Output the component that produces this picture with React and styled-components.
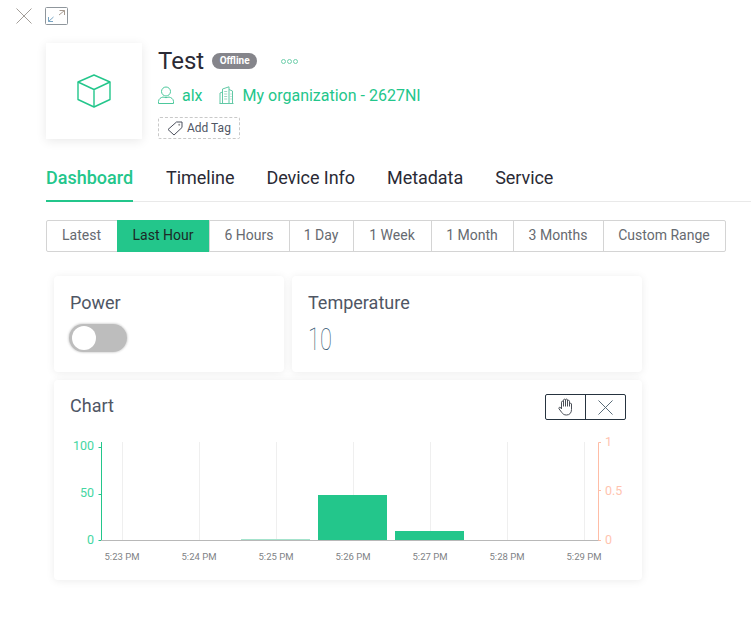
import React from 'react'
import styled, { createGlobalStyle } from 'styled-components'

const GREEN = '#23c68b'
const INK = '#2a2a35'
const SLATE = '#4f5664'

const GlobalStyle = createGlobalStyle`
  html, body {
    margin: 0;
    background: #fff;
    font-family: Roboto, "Liberation Sans", sans-serif;
  }
`

const Page = styled.div`
  width: 751px;
  height: 622px;
  overflow: hidden;
  background: #fff;
`

const TopBar = styled.div`
  display: flex;
  align-items: center;
  gap: 13px;
  height: 18px;
  padding: 7px 0 0 16px;

  svg {
    display: block;
  }
`

const Header = styled.header`
  display: flex;
  gap: 16px;
  margin: 18px 0 0 46px;
`

const Avatar = styled.div`
  display: flex;
  align-items: center;
  justify-content: center;
  width: 96px;
  height: 96px;
  background: #fff;
  box-shadow: 0 2px 10px rgba(0, 0, 0, 0.09);
`

const Info = styled.div`
  display: flex;
  flex-direction: column;
`

const TitleRow = styled.div`
  display: flex;
  align-items: center;
  height: 34px;
  margin-top: 1px;
`

const Title = styled.h1`
  margin: 0;
  font-size: 24px;
  font-weight: 400;
  line-height: 34px;
  color: ${INK};
`

const Badge = styled.span`
  display: inline-block;
  width: 45px;
  height: 16px;
  margin-left: 8px;
  border-radius: 8px;
  background: #85858b;
  color: #fff;
  font-size: 10px;
  font-weight: 700;
  line-height: 16px;
  text-align: center;
`

const Dots = styled.span`
  display: flex;
  gap: 1px;
  margin-left: 24px;
`

const Dot = styled.i`
  display: block;
  width: 5px;
  height: 5px;
  box-sizing: border-box;
  border: 1px solid #6fcfac;
  border-radius: 50%;
`

const MetaRow = styled.div`
  display: flex;
  align-items: center;
  height: 24px;
  margin-top: 5px;
  color: ${GREEN};
  font-size: 16px;
`

const MetaText = styled.span`
  margin-left: ${props => props.$gap}px;
`

const MetaIcon = styled.span`
  display: flex;
  margin-left: ${props => props.$offset || 0}px;
`

const AddTag = styled.div`
  display: flex;
  align-items: center;
  gap: 4px;
  box-sizing: border-box;
  width: 82px;
  height: 22px;
  margin-top: 10px;
  padding-left: 8px;
  border: 1px dashed #c9c9c9;
  border-radius: 2px;
  color: ${SLATE};
  font-size: 12px;
`

const Tabs = styled.nav`
  display: flex;
  gap: 32px;
  height: 44px;
  margin: 18px 0 0 46px;
  border-bottom: 1px solid #e9e9e9;
`

const Tab = styled.a`
  box-sizing: border-box;
  height: 45px;
  margin-right: ${props => (props.$active ? 1 : 0)}px;
  padding-top: 9px;
  border-bottom: ${props => (props.$active ? `2px solid ${GREEN}` : 'none')};
  color: ${props => (props.$active ? GREEN : INK)};
  font-size: 18px;
  font-weight: ${props => (props.$active ? 500 : 400)};
  letter-spacing: ${props => (props.$active ? 0 : -0.05)}px;
  line-height: 24px;
`

const Ranges = styled.div`
  display: flex;
  box-sizing: border-box;
  width: 680px;
  height: 32px;
  margin: 18px 0 0 46px;
  border: 1px solid #d4d4d4;
  border-radius: 2px;
`

const Range = styled.div`
  box-sizing: border-box;
  width: ${props => props.$width}px;
  margin: ${props => (props.$active ? '-1px 0' : '0')};
  padding-right: 1px;
  border-left: ${props => (props.$first ? 'none' : `1px solid ${props.$active ? GREEN : '#d4d4d4'}`)};
  background: ${props => (props.$active ? GREEN : 'transparent')};
  color: ${props => (props.$active ? '#1c2a27' : '#666a70')};
  font-size: 14px;
  line-height: ${props => (props.$active ? 30 : 28)}px;
  text-align: center;
`

const Grid = styled.div`
  display: grid;
  grid-template-columns: 230px 350px;
  gap: 8px;
  width: 588px;
  margin: 24px 0 0 54px;
`

const Card = styled.section`
  position: relative;
  box-sizing: border-box;
  height: ${props => props.$height}px;
  grid-column: ${props => (props.$wide ? '1 / 3' : 'auto')};
  padding: 15px 16px 0;
  border-radius: 4px;
  background: #fff;
  box-shadow: 0 1px 8px rgba(0, 0, 0, 0.08);
`

const CardTitle = styled.h2`
  margin: 0;
  color: ${SLATE};
  font-size: 18px;
  font-weight: 400;
  line-height: 24px;
`

const Switch = styled.div`
  position: relative;
  width: 58px;
  height: 28px;
  margin: 9px 0 0 -1px;
  border-radius: 14px;
  background: #bdbdbd;
  box-shadow: 0 0 2px 1px rgba(0, 0, 0, 0.14);
`

const Knob = styled.div`
  position: absolute;
  top: 2px;
  left: 3px;
  width: 24px;
  height: 24px;
  border-radius: 50%;
  background: #fff;
`

const Value = styled.div`
  margin-top: 6px;
  color: #2f5470;
  font-size: 32px;
  font-weight: 100;
  line-height: 36px;
  transform: scaleX(0.68);
  transform-origin: left center;
`

const ChartHead = styled.div`
  display: flex;
  align-items: flex-start;
  justify-content: space-between;
  margin-top: -1px;
`

const ChartTools = styled.div`
  display: flex;
  border: 1px solid #26333f;
  border-radius: 2px;
`

const ChartTool = styled.button`
  display: flex;
  align-items: center;
  justify-content: center;
  width: ${props => (props.$divided ? 40 : 39)}px;
  height: 24px;
  padding: 0;
  border: none;
  border-left: ${props => (props.$divided ? '1px solid #26333f' : 'none')};
  background: none;
`

const ChartBox = styled.div`
  margin: 14px -16px 0;

  svg {
    display: block;
  }
`

const CloseIcon = ({ size, color }) => (
  <svg width={size} height={size} viewBox="0 0 16 16" fill="none" stroke={color} strokeWidth="1">
    <path d="M0.5 0.5 15.5 15.5M15.5 0.5 0.5 15.5" />
  </svg>
)

const ExpandIcon = () => (
  <svg width="23" height="18" viewBox="0 0 23 18" fill="none">
    <rect x="0.5" y="0.5" width="22" height="17" rx="1" stroke="#8f969c" />
    <path d="M14.5 3.5H19.5V8M19.5 3.5 14 8" stroke="#a69a90" />
    <path d="M3.5 10V14.5H8M3.5 14.5 8.5 10" stroke="#7aa6c4" />
  </svg>
)

const CubeIcon = () => (
  <svg width="34" height="34" viewBox="0 0 34 34" fill="none" stroke={GREEN} strokeWidth="1.4" strokeLinejoin="round">
    <path d="M17 1 33 8V25.5L17 33 1 25.5V8Z" />
    <path d="M1 8 17 15.5 33 8M17 15.5V33" />
  </svg>
)

const UserIcon = () => (
  <svg width="16" height="18" viewBox="0 0 16 18" fill="none" stroke="#4cc89c" strokeWidth="1">
    <circle cx="8" cy="5.5" r="4.5" />
    <path d="M0.5 17.5V15.5C0.5 12.8 3 11.5 5 11 6.5 11.8 9.5 11.8 11 11 13 11.5 15.5 12.8 15.5 15.5V17.5Z" />
  </svg>
)

const BuildingIcon = () => (
  <svg width="15" height="18" viewBox="0 0 15 18" fill="none" stroke="#62c9a6" strokeWidth="1">
    <path d="M3.5 17.5V3L10 0.8V17.5M10 3.5 13.5 5V17.5M0.5 17.5H14.5M1 17.5V7L3.5 6" />
    <path d="M5.2 5.5H8.2M5.2 8H8.2M5.2 10.5H8.2M5.2 13H8.2M11.4 8H12.6M11.4 10.5H12.6M11.4 13H12.6" stroke="#9ed6c2" />
  </svg>
)

const TagIcon = () => (
  <svg width="16" height="15" viewBox="0 0 16 15" fill="none" stroke="#4b4f5c" strokeWidth="1">
    <path d="M9.5 1 15 1 15 6.5 7 14 1 8.5Z" strokeLinejoin="round" />
    <circle cx="12.2" cy="3.8" r="1" fill="#9a9a9a" stroke="none" />
  </svg>
)

const HandIcon = () => (
  <svg width="15" height="18" viewBox="0 0 15 18" fill="none" stroke="#4a4f57" strokeWidth="1" strokeLinejoin="round">
    <path d="M3.5 11V4.2C3.5 2.8 5.5 2.8 5.5 4.2V2.2C5.5 0.8 7.5 0.8 7.5 2.2V2C7.5 0.7 9.5 0.7 9.5 2V3.2C9.5 2 11.5 2 11.5 3.2V6C11.5 5 13.5 5 13.5 6V11.5C13.5 15 11.5 17 8.5 17 6 17 5 16.2 3.8 14.5L1 10.8C0.3 9.7 1.8 8.6 2.7 9.6Z" />
    <path d="M5.5 4V8.5M7.5 2V8.5M9.5 3V8.5M11.5 5.5V8.5" />
  </svg>
)

const RANGES = [
  ['Latest', 70],
  ['Last Hour', 92],
  ['6 Hours', 80],
  ['1 Day', 64],
  ['1 Week', 78],
  ['1 Month', 82],
  ['3 Months', 90],
  ['Custom Range', 122],
]

const TIMES = ['5:23 PM', '5:24 PM', '5:25 PM', '5:26 PM', '5:27 PM', '5:28 PM', '5:29 PM']

// y 0 is the top of the plot (page y 442), x is page x - 54
const Chart = () => (
  <svg width="588" height="140" viewBox="0 -8 588 140" fontFamily="Roboto, sans-serif">
    {TIMES.map((time, i) => (
      <g key={time}>
        <line x1={68.5 + i * 77} x2={68.5 + i * 77} y1="0" y2="98" stroke="#efefef" />
        <text x={68 + i * 77} y="118" fontSize="9.5" textAnchor="middle" fill="#808285">{time}</text>
      </g>
    ))}
    <rect x="187" y="97" width="69" height="1" fill="#a4e3cc" />
    <rect x="264" y="53" width="69" height="45" fill={GREEN} />
    <rect x="341" y="89" width="69" height="9" fill={GREEN} />
    <path d="M47.5 0V98.5" stroke={GREEN} />
    <path d="M44.5 5.5H47.5M44.5 52.5H47.5M44.5 98.5H47.5" stroke={GREEN} />
    <path d="M47 98.5H545" stroke="#b8b8b8" />
    <path d="M544.5 0.5V98.5M544.5 0.5H547M544.5 48.5H547M544.5 98.5H547" stroke="#ffbda6" fill="none" />
    <g fontSize="12.5" fill="#45d6a2" textAnchor="end">
      <text x="40" y="8">100</text>
      <text x="40" y="55">50</text>
      <text x="40" y="102">0</text>
    </g>
    <g fontSize="12.5" fill="#ffc4b0">
      <text x="551" y="4">1</text>
      <text x="551" y="53">0.5</text>
      <text x="551" y="102">0</text>
    </g>
  </svg>
)

const App = () => (
  <Page>
    <GlobalStyle />
    <TopBar>
      <CloseIcon size={16} color="#a39e99" />
      <ExpandIcon />
    </TopBar>
    <Header>
      <Avatar>
        <CubeIcon />
      </Avatar>
      <Info>
        <TitleRow>
          <Title>Test</Title>
          <Badge>Offline</Badge>
          <Dots>
            <Dot />
            <Dot />
            <Dot />
          </Dots>
        </TitleRow>
        <MetaRow>
          <MetaIcon>
            <UserIcon />
          </MetaIcon>
          <MetaText $gap={8}>alx</MetaText>
          <MetaIcon $offset={16}>
            <BuildingIcon />
          </MetaIcon>
          <MetaText $gap={9}>My organization - 2627NI</MetaText>
        </MetaRow>
        <AddTag>
          <TagIcon />
          Add Tag
        </AddTag>
      </Info>
    </Header>
    <Tabs>
      <Tab $active>Dashboard</Tab>
      <Tab>Timeline</Tab>
      <Tab>Device Info</Tab>
      <Tab>Metadata</Tab>
      <Tab>Service</Tab>
    </Tabs>
    <Ranges>
      {RANGES.map(([label, width], i) => (
        <Range key={label} $width={width} $first={i === 0} $active={label === 'Last Hour'}>
          {label}
        </Range>
      ))}
    </Ranges>
    <Grid>
      <Card $height={96}>
        <CardTitle>Power</CardTitle>
        <Switch>
          <Knob />
        </Switch>
      </Card>
      <Card $height={96}>
        <CardTitle>Temperature</CardTitle>
        <Value>10</Value>
      </Card>
      <Card $wide $height={200}>
        <ChartHead>
          <CardTitle>Chart</CardTitle>
          <ChartTools>
            <ChartTool>
              <HandIcon />
            </ChartTool>
            <ChartTool $divided>
              <CloseIcon size={15} color="#4f6270" />
            </ChartTool>
          </ChartTools>
        </ChartHead>
        <ChartBox>
          <Chart />
        </ChartBox>
      </Card>
    </Grid>
  </Page>
)

export default App
